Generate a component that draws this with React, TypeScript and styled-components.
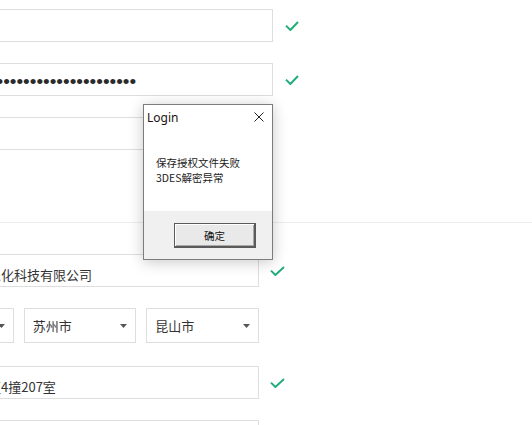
import React from 'react'
import styled, { createGlobalStyle } from 'styled-components'

const GlobalStyle = createGlobalStyle`
  html, body {
    margin: 0;
    padding: 0;
    background: #fff;
  }
  body {
    font-family: 'Noto Sans CJK SC', 'Noto Sans', sans-serif;
    color: #333;
  }
`

const StyledPage = styled.div`
  position: relative;
  width: 532px;
  height: 425px;
  overflow: hidden;
  background: #fff;
`

const StyledSection = styled.div<{ $top: number; $bottom: number; $gap: number }>`
  display: flex;
  flex-flow: column nowrap;
  gap: ${p => p.$gap}px;
  margin-left: -99px;
  padding-top: ${p => p.$top}px;
  padding-bottom: ${p => p.$bottom}px;
`

const StyledDivider = styled.div`
  height: 1px;
  background: #ededed;
`

const StyledRow = styled.div<{ $gap: number }>`
  display: flex;
  align-items: center;
  gap: ${p => p.$gap}px;
`

const StyledField = styled.div<{ $width: number }>`
  box-sizing: border-box;
  display: flex;
  align-items: center;
  width: ${p => p.$width}px;
  height: 33px;
  padding: 7px 8px 0;
  border: 1px solid #dedede;
  background: #fff;
  font-size: 13px;
  color: #333;
  white-space: nowrap;
  overflow: hidden;
  flex-shrink: 0;
`

const StyledDots = styled.span`
  font-family: 'Liberation Sans', Arial, sans-serif;
  font-size: 19px;
  letter-spacing: 0;
  color: #2b2b2b;
  margin-top: -3px;
`

const StyledSelectRow = styled.div`
  display: flex;
  gap: 10px;
  width: 358px;
`

const StyledSelect = styled.div`
  box-sizing: border-box;
  flex: 1;
  display: flex;
  align-items: center;
  justify-content: space-between;
  height: 35px;
  padding: 0 8px;
  border: 1px solid #dedede;
  background: #fff;
  font-size: 13px;
  color: #333;
  white-space: nowrap;
`

const StyledCheck = styled.svg`
  display: block;
  flex-shrink: 0;
`

const StyledDialog = styled.div`
  position: absolute;
  left: 143px;
  top: 104px;
  width: 130px;
  height: 156px;
  box-sizing: border-box;
  display: flex;
  flex-flow: column nowrap;
  border: 1px solid #7c7c7c;
  background: #fff;
  box-shadow: 0 2px 14px rgba(0, 0, 0, 0.22);
  font-family: 'Noto Sans CJK SC', sans-serif;
  color: #111;
`

const StyledTitleBar = styled.div`
  display: flex;
  align-items: center;
  justify-content: space-between;
  height: 24px;
  padding: 0 8px 0 3px;
  font-family: 'Noto Sans', 'Liberation Sans', sans-serif;
  font-size: 12px;
  color: #1a1010;
`

const StyledMessage = styled.div`
  height: 82px;
  box-sizing: border-box;
  padding: 26px 0 0 12px;
  font-size: 10.5px;
  line-height: 15px;
  color: #222;
`

const StyledFooter = styled.div`
  flex: 1;
  display: flex;
  justify-content: flex-end;
  align-items: flex-start;
  padding: 12px 16px 0 0;
  background: #f0f0f0;
`

const StyledButton = styled.button`
  box-sizing: border-box;
  width: 82px;
  height: 25px;
  padding: 0;
  border: 1px solid #5a5a5a;
  border-right-width: 2px;
  border-bottom-width: 2px;
  background: #e9e9e9;
  box-shadow: inset 1px 1px 0 #fff, inset -1px -1px 0 #a8a8a8;
  font-family: 'Noto Sans CJK SC', sans-serif;
  font-size: 10.5px;
  color: #111;
`

const Check = ({ width }: { width: number }) => (
  <StyledCheck width={width} height="10" viewBox={`0 0 ${width} 10`}>
    <path d={`M1 4.6 L5.4 9 L${width - 1} 1`} fill="none" stroke="#22ad7a" strokeWidth="2" />
  </StyledCheck>
)

const Caret = () => (
  <svg width="7" height="4" viewBox="0 0 7 4">
    <path d="M0 0 H7 L3.5 4 Z" fill="#555" />
  </svg>
)

const App = () => {
  return (
    <StyledPage>
      <GlobalStyle />

      <StyledSection $top={9} $bottom={72} $gap={21}>
        <StyledRow $gap={12}>
          <StyledField $width={372}></StyledField>
          <Check width={14} />
        </StyledRow>
        <StyledRow $gap={12}>
          <StyledField $width={372}>
            <StyledDots>{'•'.repeat(34)}</StyledDots>
          </StyledField>
          <Check width={14} />
        </StyledRow>
        <StyledRow $gap={12}>
          <StyledField $width={320}></StyledField>
        </StyledRow>
      </StyledSection>

      <StyledDivider />

      <StyledSection $top={31} $bottom={0} $gap={21}>
        <StyledRow $gap={11}>
          <StyledField $width={358}>昆山市智联信息化科技有限公司</StyledField>
          <Check width={15} />
        </StyledRow>
        <StyledSelectRow>
          <StyledSelect>江苏省<Caret /></StyledSelect>
          <StyledSelect>苏州市<Caret /></StyledSelect>
          <StyledSelect>昆山市<Caret /></StyledSelect>
        </StyledSelectRow>
        <StyledRow $gap={11} style={{ marginTop: 2 }}>
          <StyledField $width={358}>玉山镇科技园区4撞207室</StyledField>
          <Check width={15} />
        </StyledRow>
        <StyledRow $gap={11}>
          <StyledField $width={358}></StyledField>
        </StyledRow>
      </StyledSection>

      <StyledDialog>
        <StyledTitleBar>
          <span>Login</span>
          <svg width="10" height="10" viewBox="0 0 10 10">
            <path d="M0.5 0.5 L9.5 9.5 M9.5 0.5 L0.5 9.5" stroke="#222" strokeWidth="1" />
          </svg>
        </StyledTitleBar>
        <StyledMessage>
          保存授权文件失败<br />
          3DES解密异常
        </StyledMessage>
        <StyledFooter>
          <StyledButton>确定</StyledButton>
        </StyledFooter>
      </StyledDialog>
    </StyledPage>
  )
}

export default App
